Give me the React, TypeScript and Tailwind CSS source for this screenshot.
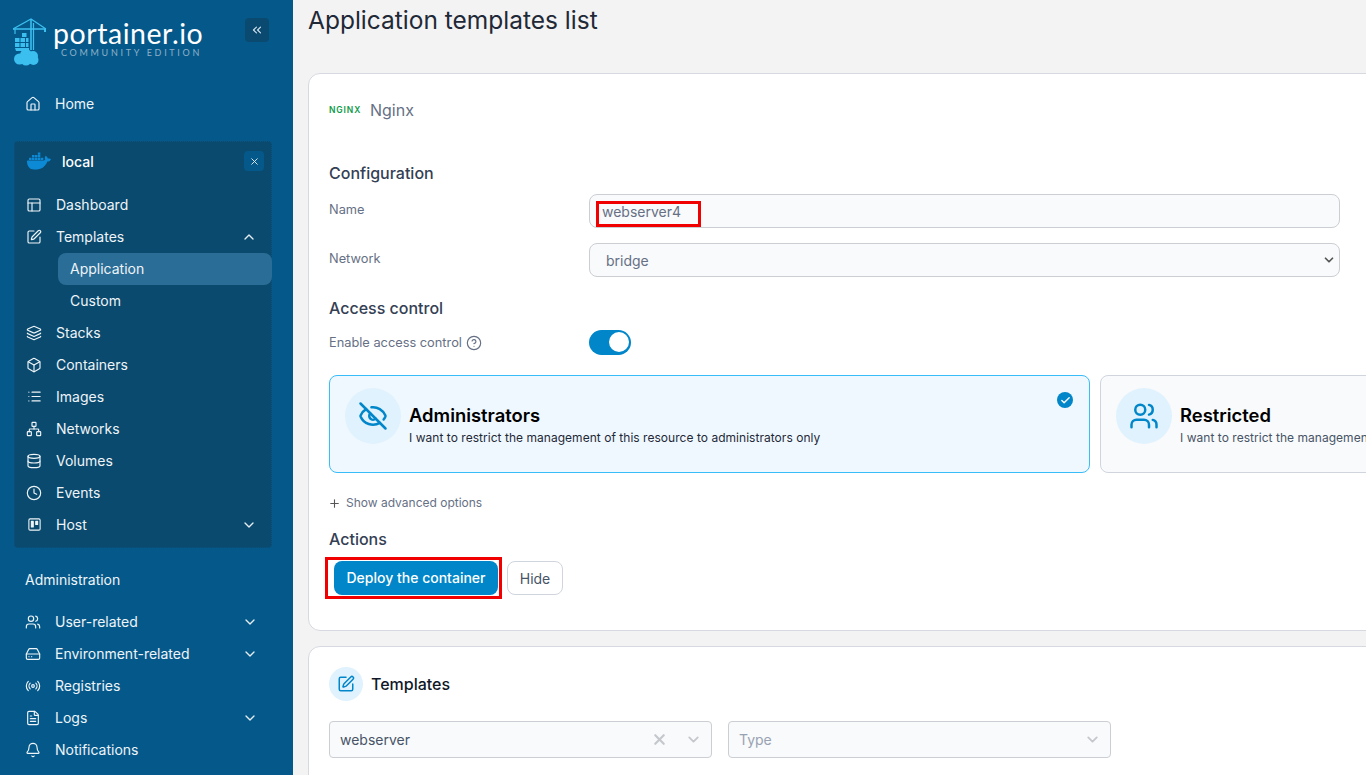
import React from "react";
import {
  House, PanelsTopLeft, SquarePen, Layers, Box, List, Network, Database, Clock, Users, HardDrive, Radio,
  FileText, Bell, ChevronDown, ChevronUp, ChevronsLeft, X, EyeOff, CircleHelp, Plus, Check,
} from "lucide-react";
import { SiDocker } from "react-icons/si";

const font = { fontFamily: "Inter, 'Liberation Sans', sans-serif" };
const sw = 1.75;

function TrelloIcon({ size = 15 }: { size?: number }) {
  return (
    <svg width={size} height={size} viewBox="0 0 24 24" fill="none" stroke="currentColor" strokeWidth={sw} strokeLinecap="round" strokeLinejoin="round">
      <rect x="3" y="3" width="18" height="18" rx="2" />
      <rect x="7" y="7" width="3" height="9" fill="currentColor" />
      <rect x="14" y="7" width="3" height="5" fill="currentColor" />
    </svg>
  );
}

function CraneLogo() {
  return (
    <svg width="34" height="48" viewBox="0 0 34 48" fill="none" className="shrink-0">
      <g stroke="#3bbfef" strokeWidth="1.2">
        <path d="M0 11 L33 11" strokeWidth="1.6" />
        <path d="M0 11 L18 1 L33 11" />
        <path d="M18 1 V32" strokeWidth="1.6" />
        <path d="M20.5 5 V32" strokeWidth="1.2" />
        <path d="M2 11 V16" />
        <path d="M32 11 V14" strokeWidth="2" />
      </g>
      <g fill="#3bbfef">
        <rect x="9" y="15" width="4.5" height="4" />
        <rect x="2" y="20" width="4.5" height="4" />
        <rect x="7.5" y="20" width="4.5" height="4" />
        <rect x="13" y="20" width="2.5" height="4" />
        <rect x="2" y="25" width="4.5" height="4" />
        <rect x="7.5" y="25" width="4.5" height="4" />
        <rect x="13" y="25" width="2.5" height="4" />
        <path d="M2 30 H16 V33 H3 Z" />
        <circle cx="6.5" cy="41" r="5.5" />
        <circle cx="13" cy="37" r="6" />
        <circle cx="20" cy="38" r="5" />
        <circle cx="13" cy="42" r="5.5" />
        <circle cx="20.5" cy="42" r="5" />
      </g>
    </svg>
  );
}

function Nav({ icon, label, chevron }: { icon?: React.ReactNode; label: string; chevron?: "up" | "down" }) {
  return (
    <div className="flex h-8 items-center pb-px text-[14px] text-[#eef4f8]">
      <span className="flex w-[16px] shrink-0 justify-center">{icon}</span>
      <span className="ml-[14px] flex-1">{label}</span>
      {chevron === "down" && <ChevronDown size={16} className="text-[#e6eef4]" />}
      {chevron === "up" && <ChevronUp size={16} className="text-[#e6eef4]" />}
    </div>
  );
}

function Sidebar() {
  return (
    <aside className="flex h-[775px] w-[293px] shrink-0 flex-col overflow-hidden bg-[#05598a]">
      <div className="relative flex h-[88px] shrink-0 pl-[13px] pt-[18px]">
        <CraneLogo />
        <div className="ml-[6px] flex flex-col">
          <span className="mt-px text-[28.5px] leading-[28px] tracking-[0.55px] text-white" style={{ fontFamily: "Lato, sans-serif" }}>portainer.io</span>
          <span className="ml-[8px] mt-px text-[9px] leading-[9px] tracking-[2.7px] text-[#8fb0c8]" style={{ fontFamily: "Lato, sans-serif" }}>COMMUNITY EDITION</span>
        </div>
        <div className="absolute left-[245px] top-[18px] flex h-6 w-6 items-center justify-center rounded-[4px] bg-[#0b4a70]">
          <ChevronsLeft size={14} className="text-[#d5e2ec]" />
        </div>
      </div>
      <div className="shrink-0 pl-[25px] pr-[36px]">
        <Nav icon={<House size={16} strokeWidth={sw} />} label="Home" />
      </div>
      <div className="ml-[14px] mt-[21px] h-[407px] w-[258px] shrink-0 rounded-[4px] border border-dotted border-[#0a5483] bg-[#0a4a6e]">
        <div className="flex h-[38px] items-center pl-[12px] pr-[7px]">
          <SiDocker size={24} className="text-[#0d8ad6]" />
          <span className="ml-[11px] flex-1 text-[14px] font-medium text-white">local</span>
          <span className="flex h-5 w-5 items-center justify-center rounded-[4px] bg-[#05598a]">
            <X size={11} className="text-[#e6eef4]" />
          </span>
        </div>
        <div className="mt-[9px] pl-[11px]">
          <div className="pr-[14px]">
            <Nav icon={<PanelsTopLeft size={16} strokeWidth={sw} />} label="Dashboard" />
            <Nav icon={<SquarePen size={16} strokeWidth={sw} />} label="Templates" chevron="up" />
          </div>
          <div className="-mr-px ml-[32px] flex h-8 items-center rounded-[8px] bg-[#2a6d96] pb-px pl-[12px] text-[14px] text-[#eef4f8]">Application</div>
          <div className="ml-[44px] flex h-8 items-center pb-px text-[14px] text-[#eef4f8]">Custom</div>
          <div className="pr-[14px]">
            <Nav icon={<Layers size={16} strokeWidth={sw} />} label="Stacks" />
            <Nav icon={<Box size={16} strokeWidth={sw} />} label="Containers" />
            <Nav icon={<List size={15} strokeWidth={sw} />} label="Images" />
            <Nav icon={<Network size={16} strokeWidth={sw} />} label="Networks" />
            <Nav icon={<Database size={16} strokeWidth={sw} />} label="Volumes" />
            <Nav icon={<Clock size={16} strokeWidth={sw} />} label="Events" />
            <Nav icon={<TrelloIcon />} label="Host" chevron="down" />
          </div>
        </div>
      </div>
      <div className="ml-[25px] mt-[20px] flex h-[22px] shrink-0 items-center text-[14px] text-[#eef4f8]">Administration</div>
      <div className="mt-[16px] shrink-0 pl-[25px] pr-[35px]">
        <Nav icon={<Users size={16} strokeWidth={sw} />} label="User-related" chevron="down" />
        <Nav icon={<HardDrive size={16} strokeWidth={sw} />} label="Environment-related" chevron="down" />
        <Nav icon={<Radio size={16} strokeWidth={sw} />} label="Registries" />
        <Nav icon={<FileText size={16} strokeWidth={sw} />} label="Logs" chevron="down" />
        <Nav icon={<Bell size={16} strokeWidth={sw} />} label="Notifications" />
      </div>
    </aside>
  );
}

function BoxOption({ selected, icon, title, text }: { selected?: boolean; icon: React.ReactNode; title: string; text: string }) {
  return (
    <div className={`relative flex h-[98px] w-[761px] shrink-0 rounded-[8px] border pl-[15px] pt-[12px] ${selected ? "border-[#38bdf8] bg-[#eff8ff]" : "border-[#d0d5dd] bg-[#f9fafb]"}`}>
      <div className="flex h-14 w-14 shrink-0 items-center justify-center rounded-full bg-[#e0f2fe] text-[#0086c9]">{icon}</div>
      <div className="ml-[8px] pt-[15px]">
        <div className="text-[18.4px] font-semibold leading-[25px] text-black">{title}</div>
        <div className={`text-[12px] leading-[20px] tracking-[0.035px] ${selected ? "text-[#1f2937]" : "text-[#475467]"}`}>{text}</div>
      </div>
      {selected && (
        <span className="absolute right-[16px] top-[16px] flex h-4 w-4 items-center justify-center rounded-full bg-[#0086c9]">
          <Check size={11} strokeWidth={3} className="text-white" />
        </span>
      )}
    </div>
  );
}

function Row({ label, children }: { label: React.ReactNode; children: React.ReactNode }) {
  return (
    <div className="flex">
      <div className="w-[260px] shrink-0 pt-px text-[12.8px] leading-[30px] text-[#667085]">{label}</div>
      {children}
    </div>
  );
}

function Main() {
  return (
    <main className="min-w-0 flex-1 overflow-hidden bg-[#f3f3f3] pl-[15px] pt-[4px]">
      <h1 className="h-[32px] text-[24.5px] font-normal leading-[32px] text-[#1f2937]">Application templates list</h1>
      <section className="mt-[37px] h-[558px] w-[1200px] rounded-[12px] border border-[#d6d9e0] bg-white pl-[20px] pt-[24px]">
        <div className="flex h-[24px] items-center">
          <span className="w-[32px] pt-px text-[8.5px] font-semibold tracking-[0.9px] text-[#0e9b48]">NGINX</span>
          <span className="ml-[9px] text-[16px] text-[#667085]">Nginx</span>
        </div>
        <div className="mt-[39px] h-[24px] text-[16px] font-medium leading-[24px] text-[#344054]">Configuration</div>
        <div className="w-[1011px]">
          <div className="mt-[9px]">
            <Row label="Name">
              <div className="relative flex h-[34px] flex-1 items-center rounded-[8px] border border-[#cbced3] bg-[#f9fafb] pl-[12px] text-[14px] text-[#667085]">
                webserver4
                <span className="absolute left-[6px] top-[6px] h-[26px] w-[105px] border-[3px] border-[#f00000]" />
              </div>
            </Row>
          </div>
          <div className="mt-[15px]">
            <Row label="Network">
              <div className="flex h-[34px] flex-1 items-center justify-between rounded-[8px] border border-[#cbced3] bg-[#f9fafb] pl-[16px] pr-[3px] text-[14px] text-[#667085]">
                bridge
                <ChevronDown size={14} strokeWidth={3} className="text-[#555]" />
              </div>
            </Row>
          </div>
        </div>
        <div className="mt-[19px] h-[24px] text-[16px] font-medium leading-[24px] text-[#344054]">Access control</div>
        <div className="mt-[9px] flex h-[26px] items-center">
          <div className="flex w-[260px] items-center gap-[4px] pt-[2px] text-[12.8px] text-[#667085]">
            Enable access control <CircleHelp size={16} strokeWidth={1.75} className="text-[#667085]" />
          </div>
          <div className="flex h-[25px] w-[42px] items-center justify-end rounded-full bg-[#0086c9] pr-[2px]">
            <span className="h-[20px] w-[20px] rounded-full bg-white" />
          </div>
        </div>
        <div className="mt-[20px] flex gap-[10px]">
          <BoxOption selected icon={<EyeOff size={30} strokeWidth={2} />} title="Administrators" text="I want to restrict the management of this resource to administrators only" />
          <BoxOption icon={<Users size={30} strokeWidth={2} />} title="Restricted" text="I want to restrict the management of this resource to a set of users and/or teams" />
        </div>
        <div className="mt-[20px] flex h-[20px] items-center text-[12px] text-[#667085]">
          <Plus size={13} className="mr-[5px] -ml-px text-[#555]" /> Show advanced options
        </div>
        <div className="mt-[14px] h-[24px] text-[16px] font-medium leading-[24px] text-[#344054]">Actions</div>
        <div className="relative mt-[10px] flex items-center pl-[5px]">
          <span className="flex h-[34px] w-[164px] items-center justify-center rounded-[8px] bg-[#0086c9] pb-px text-[14px] font-medium text-white">Deploy the container</span>
          <span className="ml-[9px] flex h-[34px] w-[56px] items-center justify-center rounded-[8px] border border-[#d0d5dd] bg-white text-[14px] text-[#475467]">Hide</span>
          <span className="absolute left-[-4px] top-[-4px] h-[42px] w-[177px] border-[3px] border-[#f00000]" />
        </div>
      </section>
      <section className="mt-[15px] h-[200px] w-[1200px] rounded-[12px] border border-[#d6d9e0] bg-white pl-[20px] pt-[20px]">
        <div className="flex h-[34px] items-center">
          <span className="flex h-[34px] w-[34px] items-center justify-center rounded-full bg-[#e0f2fe] text-[#0086c9]">
            <SquarePen size={18} />
          </span>
          <span className="ml-[8px] text-[16px] font-medium text-[#101828]">Templates</span>
        </div>
        <div className="mt-[20px] flex gap-[16px]">
          <div className="flex h-[37px] w-[383px] items-center rounded-[4px] border border-[#cbced3] bg-[#f9fafb] pl-[10px] pr-[9px] text-[14px] text-[#475467]">
            <span className="flex-1">webserver</span>
            <X size={17} strokeWidth={3} className="mr-[17px] text-[#c4c7cc]" />
            <ChevronDown size={17} strokeWidth={2.5} className="text-[#c4c7cc]" />
          </div>
          <div className="flex h-[37px] w-[383px] items-center rounded-[4px] border border-[#cbced3] bg-[#f9fafb] pl-[10px] pr-[9px] text-[14px] text-[#98a2b3]">
            <span className="flex-1">Type</span>
            <ChevronDown size={17} strokeWidth={2.5} className="text-[#c4c7cc]" />
          </div>
        </div>
      </section>
    </main>
  );
}

export default function App() {
  return (
    <div className="flex h-[775px] w-[1366px] overflow-hidden" style={font}>
      <Sidebar />
      <Main />
    </div>
  );
}
